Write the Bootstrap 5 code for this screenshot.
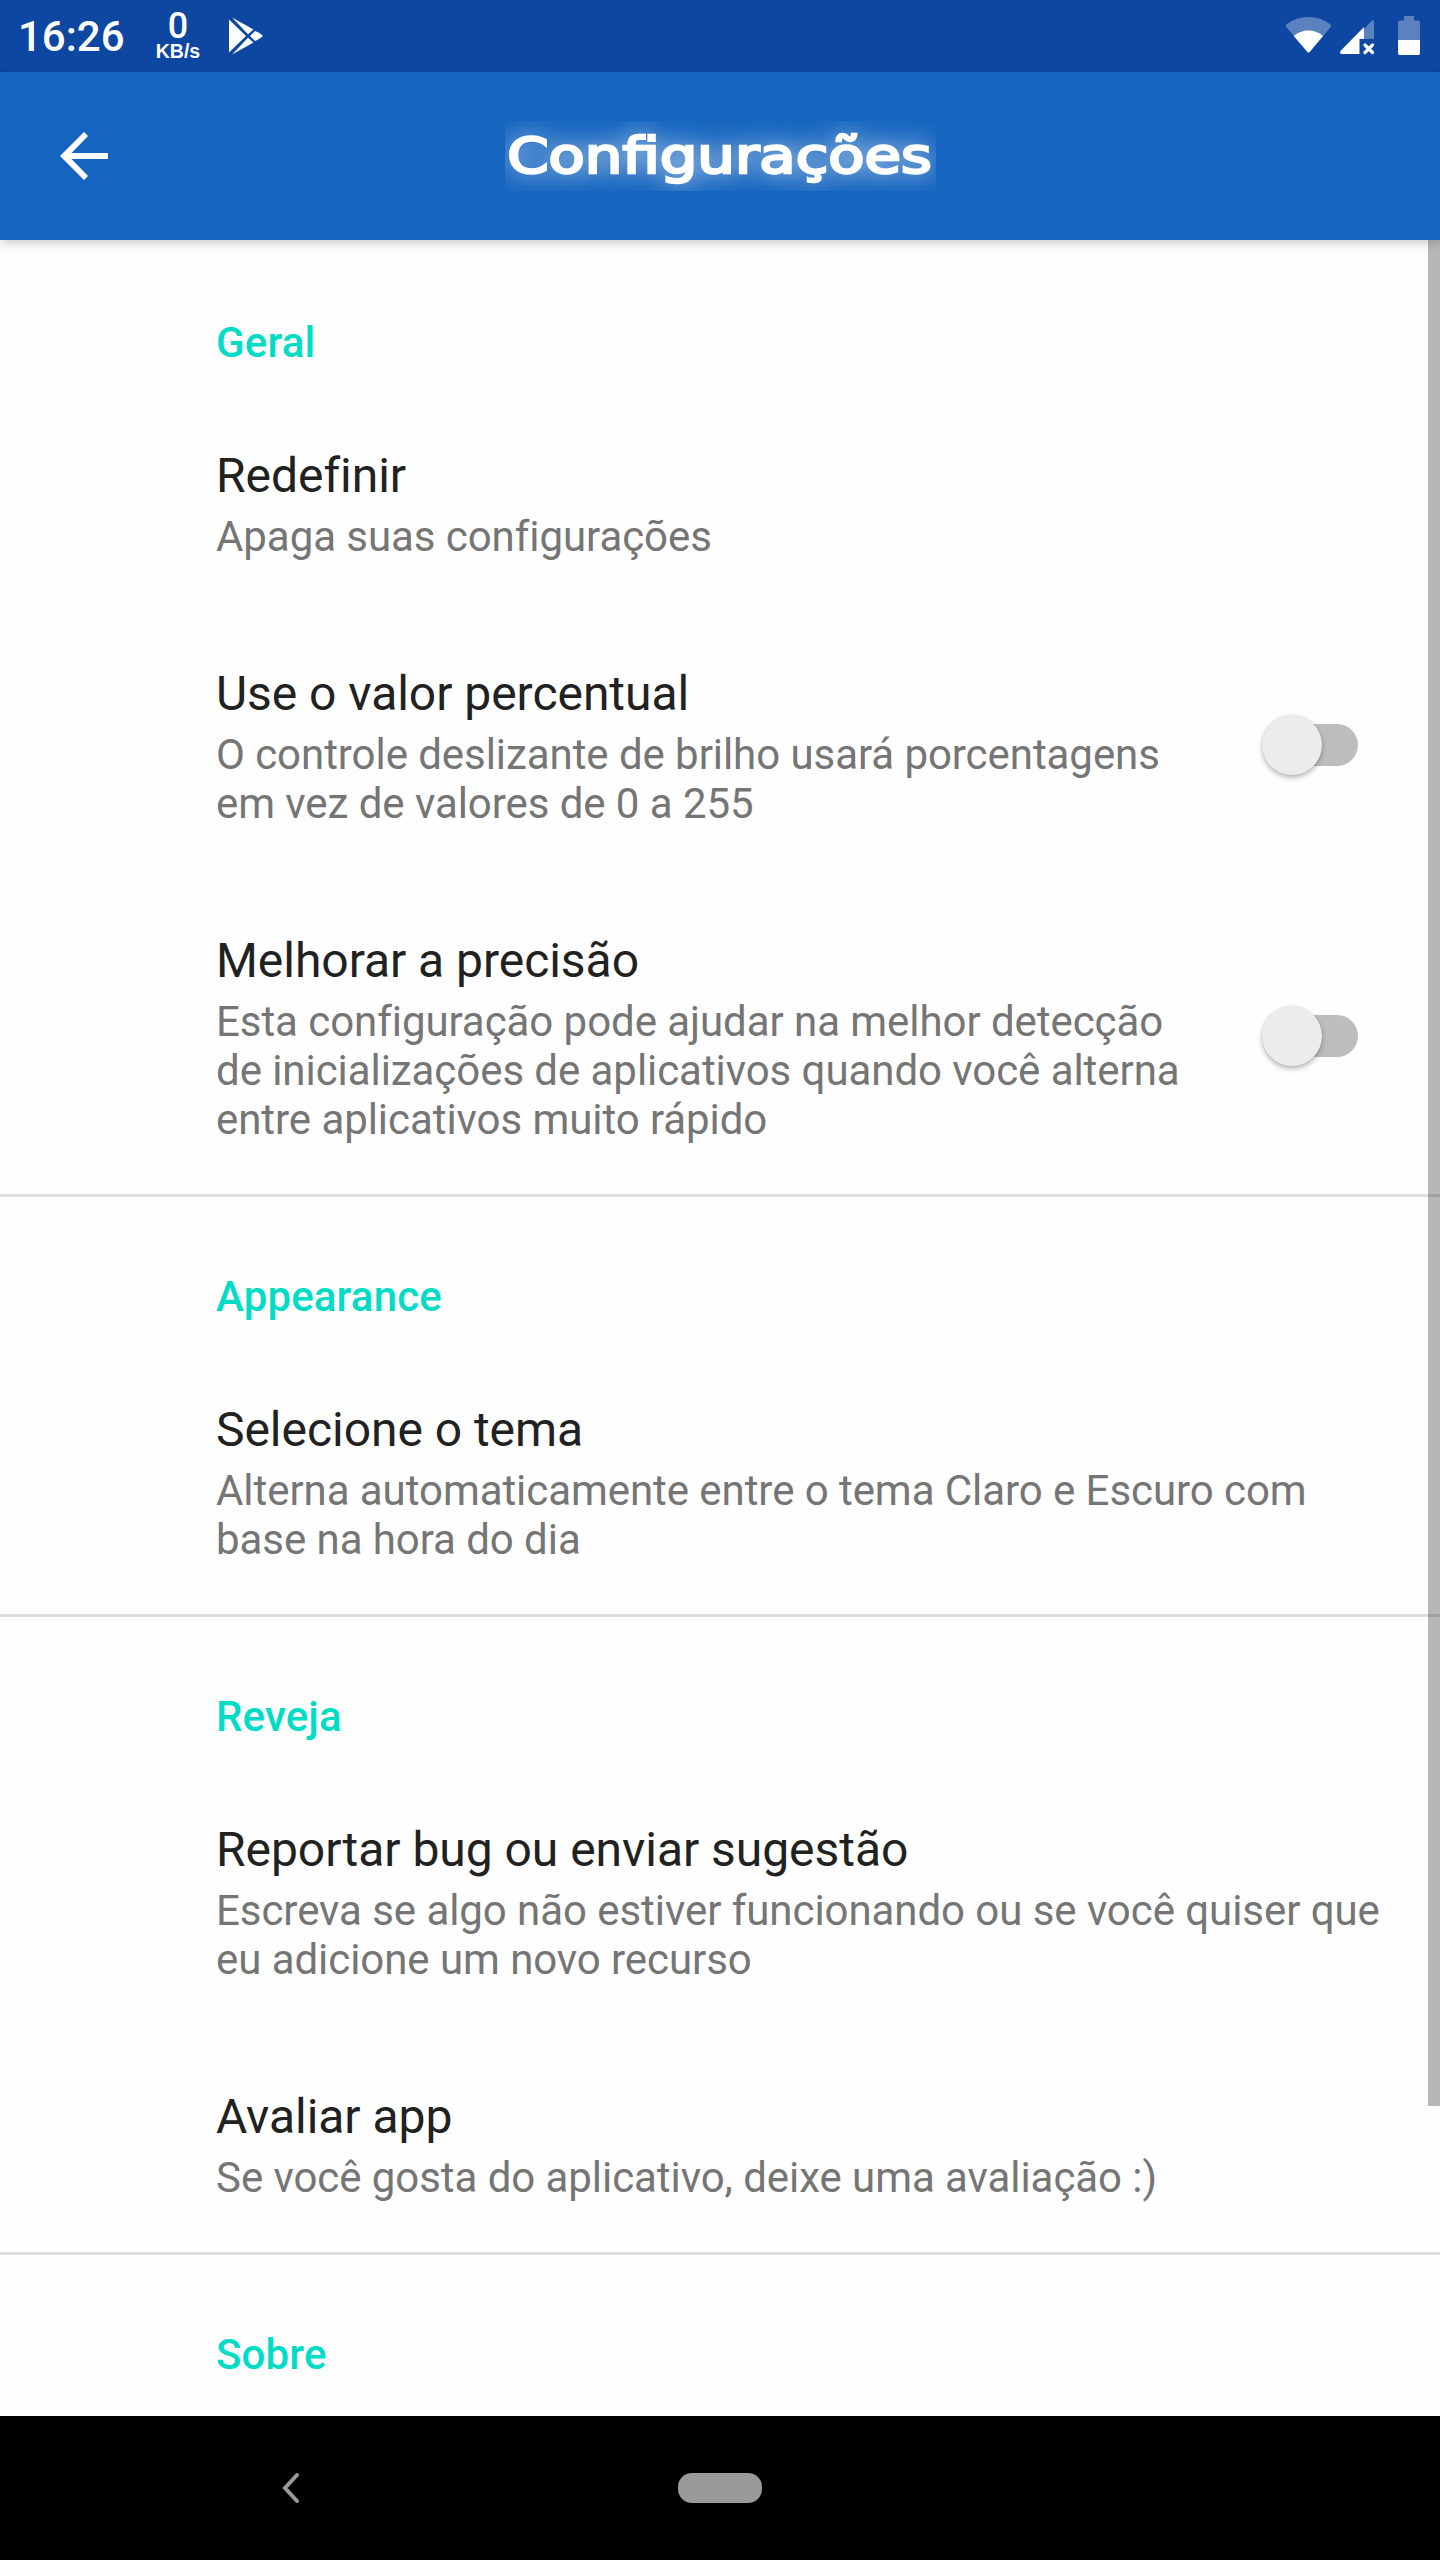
<!DOCTYPE html>
<html lang="pt-BR">
<head>
<meta charset="utf-8">
<meta name="viewport" content="width=device-width, initial-scale=1">
<title>Configurações</title>
<link href="https://cdn.jsdelivr.net/npm/bootstrap@5.3.0/dist/css/bootstrap.min.css" rel="stylesheet">
<style>
body{font-family:Roboto,sans-serif;background:#fefefe;color:#212121;height:2560px;overflow:hidden}
svg{display:block;flex:none}
.statusbar{height:72px;background:#0d47a1;padding-left:18px;padding-right:20px}
.clock{font-size:42px;font-weight:500;line-height:72px;width:138px;padding-top:2px}
.netspeed{width:44px;line-height:1;height:48px}
.netnum{font-size:36px;font-weight:500;line-height:28px;height:30px}
.netunit{font:bold 19.5px/18px "Liberation Sans",sans-serif}
.playicon{margin-left:28px}
.appbar{height:168px;background:#1565c0;z-index:2;box-shadow:0 3px 10px rgba(0,0,0,.2);padding:0 60px}
.backbtn{width:48px}
.glow{font-family:"DejaVu Sans",sans-serif;font-size:49px;line-height:72px;height:70px;width:431px;overflow:hidden;text-shadow:0 0 28px rgba(255,255,255,.9),0 0 18px rgba(255,255,255,.45);-webkit-text-stroke:2.5px #fff;white-space:nowrap}
.glow span{display:inline-block;transform:scaleX(1.21)}
.screen{height:2176px}
.category{height:153px;padding:78px 0 0 216px;color:#00dcc6;font-size:42px;line-height:49px;font-weight:500;letter-spacing:.15px}
.ruled{border-top:3px solid #dedede;padding-top:75px}
.pref{padding:55px 48px 50px 216px}
.pref-title{font-size:48px;line-height:56px;margin-bottom:8px;letter-spacing:-.04px}
.pref-sum{font-size:42px;line-height:49px;color:#757575;white-space:nowrap;letter-spacing:-.06px}
.toggle{width:96px;height:60px;margin-right:34px;margin-bottom:5px}
.track{left:14px;top:9px;width:82px;height:42px;background:#bdbdbd}
.thumb{left:0;top:0;width:60px;height:60px;background:#ececec;box-shadow:0 3px 5px rgba(0,0,0,.26),0 0 2px rgba(0,0,0,.1)}
.scrollthumb{right:0;top:0;width:12px;height:1866px;background:rgba(0,0,0,.28);z-index:3}
.navkeys{height:144px;padding-left:281px}
.homepill{width:84px;height:30px;background:#999;border-radius:14px;margin-left:377px}
</style>
</head>
<body class="d-flex flex-column">
<div class="statusbar d-flex align-items-center text-white">
  <span class="clock">16:26</span>
  <div class="netspeed d-flex flex-column align-items-center">
    <span class="netnum">0</span><span class="netunit">KB/s</span>
  </div>
  <svg class="playicon me-auto" width="36" height="40" viewBox="0 0 36 40" fill="#fff"><path d="M1 3.5V36.5L18 20ZM4 1.5L25.5 13.5L20 18.2ZM4 38.5L25.5 26.5L20 21.8ZM22 20L27 15C29 15.6 32 17.3 34.3 19.2Q35 20 34.3 20.8C32 22.7 29 24.4 27 25Z"/></svg>
  <svg width="140" height="48" viewBox="0 0 140 48"><path d="M5.8 14.5Q5.2 13.3 6.5 12.4Q16 5 28.5 5T50.5 12.4Q51.6 13.3 51 14.5L42.5 25L28.5 41L14.5 24.5Z" fill="#fff" fill-opacity=".32"/><path d="M13.7 24Q20 18.5 28.5 18.5T43 24L30 39.500Q28.5 41.5 27 39.5Z" fill="#fff"/><path d="M84 17L91.5 9Q94 7 94 10V27H84Z" fill="#fff" fill-opacity=".32"/><path d="M84 15V27H79.5V42H62Q59 42 60.7 38.7Z" fill="#fff"/><path d="M85 33L92.5 40.5M92.5 33L85 40.5" stroke="#fff" stroke-width="3.2" stroke-linecap="round"/><path d="M118 28V10.5Q118 8.5 120 8.5H124V4H134V8.5H138Q140 8.5 140 10.5V28Z" fill="#fff" fill-opacity=".32"/><path d="M118 28H140V41Q140 43 138.500 43H119.5Q118 43 118 41Z" fill="#fff"/></svg>
</div>
<header class="appbar d-flex align-items-center justify-content-between position-relative text-white">
  <svg class="backbtn" width="48" height="48" viewBox="0 0 48 48"><path d="M48 21H11.5L28 4L24 0L0 24L24 48L28 44L11.5 27H48Z" fill="#fff"/></svg>
  <div class="glow d-flex justify-content-center"><span>Configurações</span></div>
  <span class="backbtn"></span>
</header>
<main class="screen position-relative overflow-hidden">
  <div class="scrollthumb position-absolute"></div>
  <div class="category">Geral</div>
  <div class="pref"><div class="pref-title">Redefinir</div><div class="pref-sum">Apaga suas configurações</div></div>
  <div class="pref d-flex align-items-center justify-content-between">
    <div><div class="pref-title">Use o valor percentual</div><div class="pref-sum">O controle deslizante de brilho usará porcentagens<br>em vez de valores de 0 a 255</div></div>
    <div class="toggle position-relative"><span class="track position-absolute rounded-pill"></span><span class="thumb position-absolute rounded-circle"></span></div>
  </div>
  <div class="pref d-flex align-items-center justify-content-between">
    <div><div class="pref-title">Melhorar a precisão</div><div class="pref-sum">Esta configuração pode ajudar na melhor detecção<br>de inicializações de aplicativos quando você alterna<br>entre aplicativos muito rápido</div></div>
    <div class="toggle position-relative"><span class="track position-absolute rounded-pill"></span><span class="thumb position-absolute rounded-circle"></span></div>
  </div>
  <div class="category ruled">Appearance</div>
  <div class="pref"><div class="pref-title">Selecione o tema</div><div class="pref-sum">Alterna automaticamente entre o tema Claro e Escuro com<br>base na hora do dia</div></div>
  <div class="category ruled">Reveja</div>
  <div class="pref"><div class="pref-title">Reportar bug ou enviar sugestão</div><div class="pref-sum">Escreva se algo não estiver funcionando ou se você quiser que<br>eu adicione um novo recurso</div></div>
  <div class="pref"><div class="pref-title">Avaliar app</div><div class="pref-sum">Se você gosta do aplicativo, deixe uma avaliação :)</div></div>
  <div class="category ruled">Sobre</div>
</main>
<nav class="navkeys bg-black d-flex align-items-center">
  <svg width="20" height="32" viewBox="0 0 20 32"><path d="M16 3L4 16L16 29" fill="none" stroke="#999" stroke-width="4" stroke-linecap="round"/></svg>
  <span class="homepill"></span>
</nav>
<script src="https://cdn.jsdelivr.net/npm/bootstrap@5.3.0/dist/js/bootstrap.bundle.min.js"></script>
</body>
</html>
